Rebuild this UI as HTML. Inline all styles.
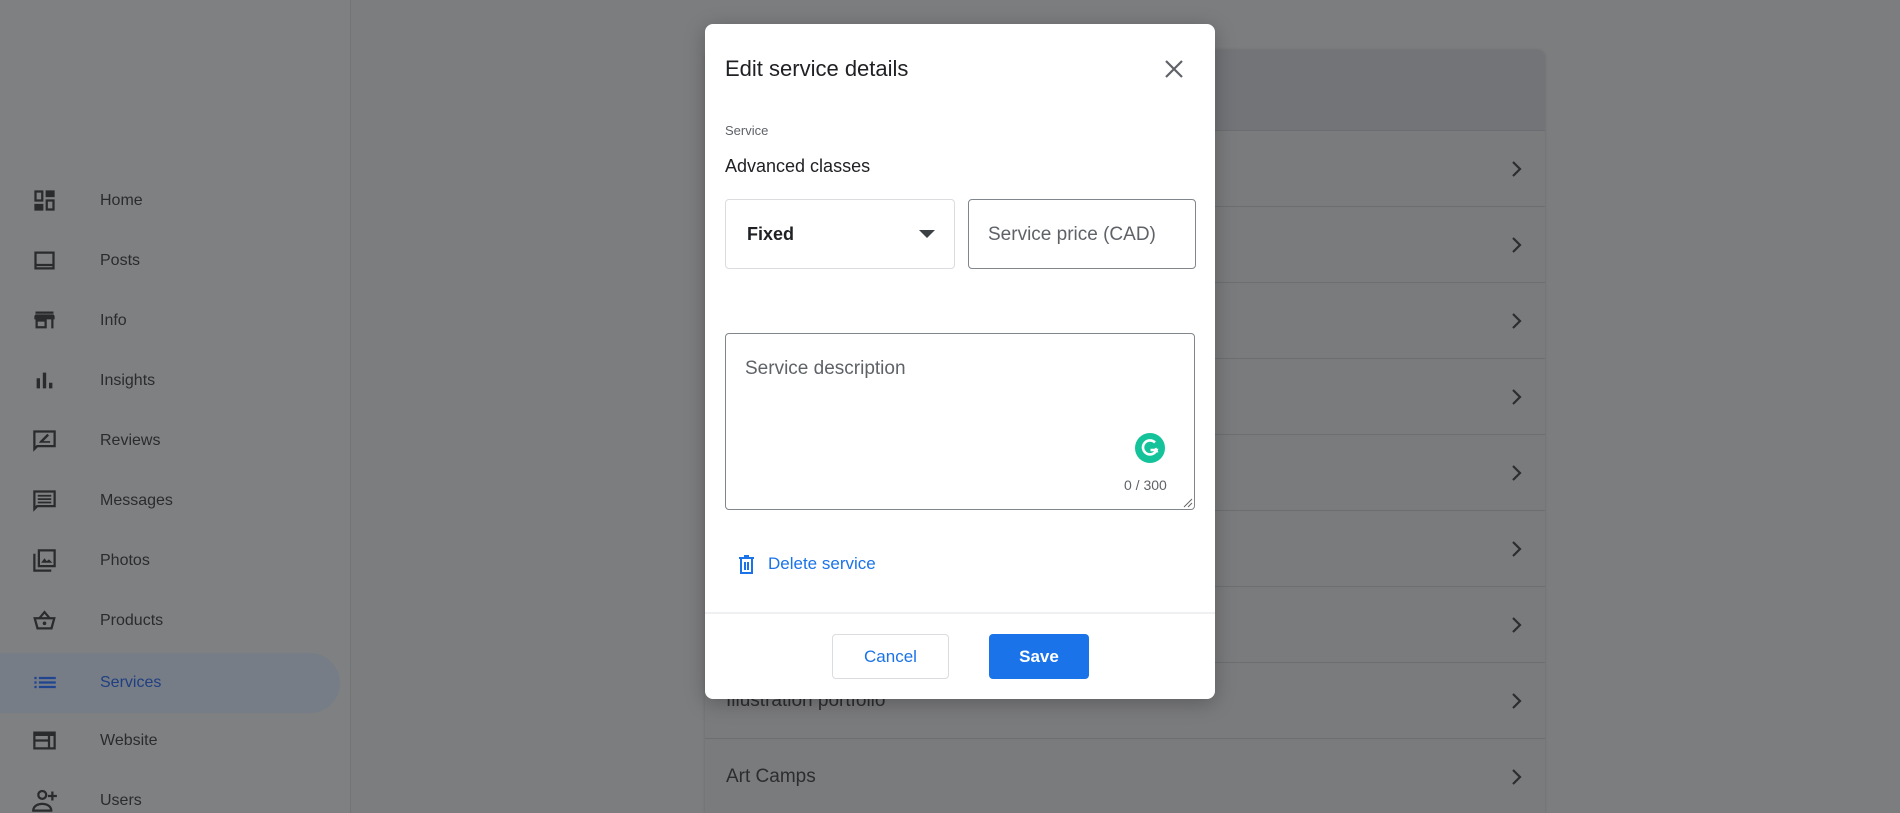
<!DOCTYPE html>
<html><head><meta charset="utf-8"><style>
*{box-sizing:border-box;margin:0;padding:0}
html,body{width:1900px;height:813px;overflow:hidden}
body{background:#7c7d7f;font-family:"Liberation Sans",Arial,sans-serif;position:relative}
.side{position:absolute;left:0;top:0;width:351px;height:813px;background:#7f8082;border-right:1px solid #737476}
.item{position:absolute;left:0;height:60px;width:340px;display:flex;align-items:center}
.item svg{position:absolute;left:31px;top:16px;width:27px;height:27px;fill:#2a2b2d}
.item span{position:absolute;left:100px;font-size:16px;color:#2a2b2d}
.item.act{background:#777d87;border-radius:0 30px 30px 0}
.item.act span{color:#1f3f80}
.item.act svg{fill:#1f4590}
.card{position:absolute;left:705px;top:50px;width:840px;height:763px;background:#7a7b7d;border-radius:8px 8px 0 0;box-shadow:0 0 3px rgba(0,0,0,.15);overflow:hidden}
.hdr{height:81px;background:#737477;border-radius:8px 8px 0 0;border-bottom:1px solid #6c6d70}
.row{position:absolute;left:0;width:840px;height:76px;border-bottom:1px solid #6d6e70}
.chev{position:absolute;left:802px;top:26px;width:20px;height:24px}
.row .t{position:absolute;left:21px;font-size:19px;color:#2c2d2f;top:27px}
.modal{position:absolute;left:705px;top:24px;width:510px;height:675px;background:#fff;border-radius:8px;box-shadow:0 4px 20px rgba(0,0,0,.25)}
.abs{position:absolute}
</style></head><body>
<div class="side">
 <div class="item" style="top:171px"><svg viewBox="0 0 24 24"><path d="M3 3h8v10H3zM3 15h8v6H3zM13 3h8v6h-8zM13 11h8v10h-8zM5 5v6h4V5zM15 13v6h4v-6z" fill-rule="evenodd"/></svg><span>Home</span></div>
 <div class="item" style="top:231px"><svg viewBox="0 0 24 24"><path d="M3 4h18v16H3zM5 6v9h14V6zM5 17v1h14v-1z" fill-rule="evenodd"/></svg><span>Posts</span></div>
 <div class="item" style="top:291px"><svg viewBox="0 0 24 24"><path d="M4 4h16v2H4zM3 8l1-1.5h16L21 8v3h-1v8H4v-8H3zM6 11v6h6v-4h-6zM14 11v8h4v-8z" fill-rule="evenodd"/></svg><span>Info</span></div>
 <div class="item" style="top:351px"><svg viewBox="0 0 24 24"><path d="M5 10h3v9H5zM10.5 5h3v14h-3zM16 14h3v5h-3z"/></svg><span>Insights</span></div>
 <div class="item" style="top:411px"><svg viewBox="0 0 24 24"><path d="M2 3h20v15H6l-4 4zM4 5v12l1-1h15V5zM7 14h10v-1.5H11l5-5-1.5-1.5L8 12.5z" fill-rule="evenodd"/></svg><span>Reviews</span></div>
 <div class="item" style="top:471px"><svg viewBox="0 0 24 24"><path d="M2 3h20v15H6l-4 4zM4 5v12l1-1h15V5zM6 7h12v1.5H6zM6 10h12v1.5H6zM6 13h12v1.5H6z" fill-rule="evenodd"/></svg><span>Messages</span></div>
 <div class="item" style="top:531px"><svg viewBox="0 0 24 24"><path d="M6 2h16v16H6zM8 4v12h12V4zM2 6h2v14h14v2H2zM9 14l3-4 2 2.5 2-1.5 3 3z" fill-rule="evenodd"/></svg><span>Photos</span></div>
 <div class="item" style="top:591px"><svg viewBox="0 0 24 24"><path d="M12 3l5 6h5l-3 11H5L2 9h5zM9.5 9h5L12 6zM4.6 11l2 7h10.8l2-7z" fill-rule="evenodd"/><circle cx="12" cy="14.5" r="1.6"/></svg><span>Products</span></div>
 <div class="item act" style="top:653px"><svg viewBox="0 0 24 24"><path d="M3 7h2v2H3zM7 7h15v2H7zM3 11h2v2H3zM7 11h15v2H7zM3 15h2v2H3zM7 15h15v2H7z"/></svg><span>Services</span></div>
 <div class="item" style="top:711px"><svg viewBox="0 0 24 24"><path d="M2 4h20v16H2zM4 8v10h11v-5H4V11h11V8zM17 8v10h3V8z" fill-rule="evenodd"/></svg><span>Website</span></div>
 <div class="item" style="top:771px"><svg viewBox="0 0 24 24"><circle cx="10" cy="7" r="3.5" fill="none" stroke="#2a2b2d" stroke-width="2"/><path d="M2 21c0-4 4-6 8-6s8 2 8 6z" fill="none" stroke="#2a2b2d" stroke-width="2"/><path d="M18 4h2v3h3v2h-3v3h-2V9h-3V7h3z"/></svg><span>Users</span></div>
</div>
<div class="card"><div class="hdr"></div>
<div class="row" style="top:81px"><svg class="chev" viewBox="0 0 20 24"><path d="M6 5l7 7-7 7" fill="none" stroke="#2c2d2f" stroke-width="2.2"/></svg></div>
<div class="row" style="top:157px"><svg class="chev" viewBox="0 0 20 24"><path d="M6 5l7 7-7 7" fill="none" stroke="#2c2d2f" stroke-width="2.2"/></svg></div>
<div class="row" style="top:233px"><svg class="chev" viewBox="0 0 20 24"><path d="M6 5l7 7-7 7" fill="none" stroke="#2c2d2f" stroke-width="2.2"/></svg></div>
<div class="row" style="top:309px"><svg class="chev" viewBox="0 0 20 24"><path d="M6 5l7 7-7 7" fill="none" stroke="#2c2d2f" stroke-width="2.2"/></svg></div>
<div class="row" style="top:385px"><svg class="chev" viewBox="0 0 20 24"><path d="M6 5l7 7-7 7" fill="none" stroke="#2c2d2f" stroke-width="2.2"/></svg></div>
<div class="row" style="top:461px"><svg class="chev" viewBox="0 0 20 24"><path d="M6 5l7 7-7 7" fill="none" stroke="#2c2d2f" stroke-width="2.2"/></svg></div>
<div class="row" style="top:537px"><svg class="chev" viewBox="0 0 20 24"><path d="M6 5l7 7-7 7" fill="none" stroke="#2c2d2f" stroke-width="2.2"/></svg></div>
<div class="row" style="top:613px"><span class="t">Illustration portfolio</span><svg class="chev" viewBox="0 0 20 24"><path d="M6 5l7 7-7 7" fill="none" stroke="#2c2d2f" stroke-width="2.2"/></svg></div>
<div class="row" style="top:689px"><span class="t">Art Camps</span><svg class="chev" viewBox="0 0 20 24"><path d="M6 5l7 7-7 7" fill="none" stroke="#2c2d2f" stroke-width="2.2"/></svg></div>
</div>

<div class="modal">
 <div class="abs" style="left:20px;top:32px;font-size:22px;color:#202124">Edit service details</div>
 <svg class="abs" style="left:459px;top:35px" width="20" height="20" viewBox="0 0 20 20"><path d="M2 2l16 16M18 2L2 18" stroke="#5f6368" stroke-width="2.2"/></svg>
 <div class="abs" style="left:20px;top:99px;font-size:13px;color:#5f6368">Service</div>
 <div class="abs" style="left:20px;top:132px;font-size:18px;color:#202124">Advanced classes</div>
 <div class="abs" style="left:20px;top:175px;width:230px;height:70px;border:1px solid #dadce0;border-radius:4px"></div>
 <div class="abs" style="left:42px;top:200px;font-size:18px;font-weight:bold;color:#202124">Fixed</div>
 <svg class="abs" style="left:214px;top:206px" width="16" height="9"><path d="M0 0h16L8 8z" fill="#3c4043"/></svg>
 <div class="abs" style="left:263px;top:175px;width:228px;height:70px;border:1px solid #80868b;border-radius:4px"></div>
 <div class="abs" style="left:283px;top:200px;font-size:19px;color:#5f6368">Service price (CAD)</div>
 <div class="abs" style="left:20px;top:309px;width:470px;height:177px;border:1px solid #80868b;border-radius:4px"></div>
 <div class="abs" style="left:40px;top:334px;font-size:19px;color:#5f6368">Service description</div>
 <svg class="abs" style="left:430px;top:409px" width="30" height="30" viewBox="0 0 30 30"><circle cx="15" cy="15" r="15" fill="#15c39a"/><path d="M20 9.5A7 7 0 1 0 21.5 17h-6" fill="none" stroke="#fff" stroke-width="2.6"/><path d="M20.5 15l1.5 3.5-3 .5" fill="none" stroke="#fff" stroke-width="2"/></svg>
 <div class="abs" style="left:419px;top:453px;font-size:14px;color:#5f6368">0 / 300</div>
 <svg class="abs" style="left:478px;top:474px" width="10" height="10"><path d="M1 9L9 1M5 9L9 5" stroke="#666" stroke-width="1"/></svg>
 <svg class="abs" style="left:33px;top:531px" width="17" height="19" viewBox="0 0 17 19"><path d="M1 3h15M6 1h5M3 4v14h11V4M7 7v8M10 7v8" fill="none" stroke="#1a73e8" stroke-width="2"/></svg>
 <div class="abs" style="left:63px;top:530px;font-size:17px;color:#1a73e8">Delete service</div>
 <div class="abs" style="left:0;top:588px;width:510px;height:2px;background:#eef0f2"></div>
 <div class="abs" style="left:127px;top:610px;width:117px;height:45px;border:1px solid #dadce0;border-radius:4px;text-align:center;line-height:43px;font-size:17px;color:#1a73e8">Cancel</div>
 <div class="abs" style="left:284px;top:610px;width:100px;height:45px;background:#1a73e8;border-radius:4px;text-align:center;line-height:45px;font-size:17px;color:#fff;font-weight:bold">Save</div>
</div>
</body></html>
